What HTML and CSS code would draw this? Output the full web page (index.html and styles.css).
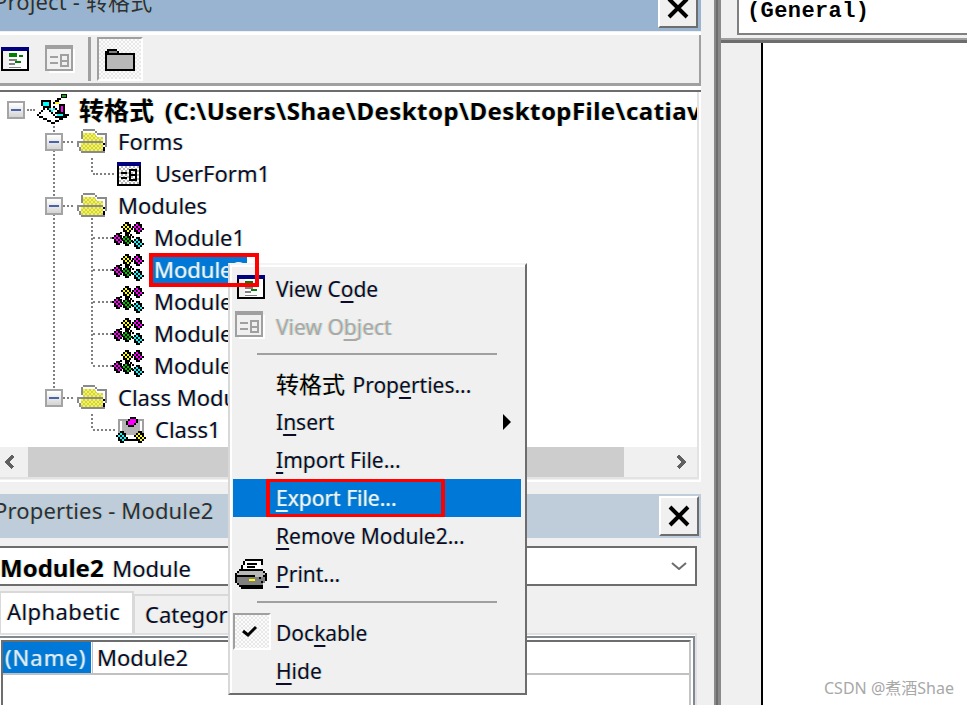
FILE: index.html
```html
<!DOCTYPE html>
<html lang="en">
<head>
<meta charset="utf-8">
<title>VBA Editor - Export File</title>
<link rel="stylesheet" href="styles.css">
</head>
<body>
<svg class="defs" aria-hidden="true">
  <defs>
    <pattern id="chk-yellow" width="4" height="4" patternUnits="userSpaceOnUse"><rect width="4" height="4" fill="#ffff00"/><rect width="2" height="2" fill="#c8c8a0"/><rect x="2" y="2" width="2" height="2" fill="#c8c8a0"/></pattern>
    <pattern id="chk-grey" width="4" height="4" patternUnits="userSpaceOnUse"><rect width="4" height="4" fill="#ffffff"/><rect width="2" height="2" fill="#b8b8b8"/><rect x="2" y="2" width="2" height="2" fill="#b8b8b8"/></pattern>
    <symbol id="dia" viewBox="0 0 12 12" width="12" height="12">
      <path fill="#000" d="M4 0h4v2H4zM2 2h2v2H2zM6 2h4v2H6zM0 4h2v2H0zM4 4h2v2H4zM8 4h2v2H8zM2 6h2v2H2zM6 6h2v2H6zM10 6h2v2h-2zM2 8h4v2H2zM8 8h2v2H8zM4 10h4v2H4z"/>
      <path d="M4 2h2v2H4zM2 4h2v2H2zM6 4h2v2H6zM4 6h2v2H4zM8 6h2v2H8zM6 8h2v2H6z"/>
    </symbol>
    <symbol id="mod" viewBox="0 0 32 27" width="32" height="27">
      <path fill="#000" d="M8 10h2v2H8zM6 12h2v2H6zM16 10h2v2h-2zM18 12h2v2h-2zM20 14h2v2h-2z"/>
      <use href="#dia" x="9" y="0" fill="#ffff00"/>
      <use href="#dia" x="20" y="0" fill="#ff00ff"/>
      <use href="#dia" x="0" y="11" fill="#ff00ff"/>
      <use href="#dia" x="9" y="12" fill="#00c000"/>
      <use href="#dia" x="20" y="15" fill="#00ffff"/>
    </symbol>
    <symbol id="folder-open" viewBox="0 0 30 24" width="30" height="24">
      <path fill="#fff" d="M6 2h12v2H6z"/>
      <path fill="url(#chk-yellow)" d="M6 4h12l2 4h6v6H6z"/>
      <path fill="url(#chk-yellow)" d="M4 14h22v8H4z"/>
      <path fill="#8a8a8a" d="M6 0h12v2H6zM4 2h2v8H4zM18 2h2v2h-2zM20 4h10v2H20zM28 6h2v12h-2zM0 12h6v2H0zM0 14h2v4H0zM2 18h2v4H2zM4 22h24v2H4zM6 12h20v2H6z"/>
      <path fill="#000" d="M26 14h2v2h-2zM26 18h2v4h-2z"/>
    </symbol>
    <symbol id="code-icon" viewBox="0 0 28 24" width="28" height="24">
      <path fill="#000080" d="M0 0h28v4H0z"/>
      <path fill="#000" d="M0 4h2v20H0zM26 4h2v20h-2zM0 22h28v2H0z"/>
      <path fill="#fff" d="M2 4h24v18H2z"/>
      <path fill="#f0f0f0" d="M2 4h6v18H2z"/>
      <path fill="#008000" d="M8 6h8v4H8zM18 8h4v2h-4zM14 14h6v2h-6z"/>
      <path fill="#808080" d="M8 12h8v2H8zM8 16h6v2H8zM8 20h12v1H8z"/>
    </symbol>
    <symbol id="object-icon" viewBox="0 0 30 28" width="30" height="28">
      <path fill="#fff" d="M4 4h26v24H4z"/>
      <path fill="#a0a0a0" d="M0 0h28v4H0zM0 4h2v22H0zM26 4h2v22h-2zM0 24h28v2H0z"/>
      <path fill="#f0f0f0" d="M2 4h24v20H2z"/>
      <path fill="#a0a0a0" d="M5 11h8v2H5zM5 17h8v2H5zM15 9h9v2h-9zM15 15h9v2h-9zM15 9h2v12h-2zM22 9h2v12h-2zM15 20h9v2h-9z"/>
    </symbol>
  </defs>
</svg>

<div class="app">
  <div class="left">
    <header class="titlebar titlebar-project">
      <span class="title-text title-clipped">Project - 转格式</span>
      <span class="close close-clipped"><svg class="x" viewBox="0 0 22 22" width="22" height="22"><path d="M2 2L20 20M20 2L2 20"/></svg></span>
    </header>
    <div class="title-rule"></div>
    <div class="toolbar">
      <svg class="tb-code" width="28" height="24"><use href="#code-icon"/></svg>
      <svg class="tb-object" width="30" height="28"><use href="#object-icon"/></svg>
      <span class="tb-sep"></span>
      <span class="tb-toggle">
        <svg viewBox="0 0 30 24" width="30" height="24"><path fill="#000" d="M2 2h10v2h2v2h16v18H0V4h2z"/><path fill="#b8b8b8" d="M2 8h26v14H2z"/><path fill="#808080" d="M4 4h8v2H4z"/></svg>
      </span>
    </div>
    <div class="tool-rules"></div>
    <div class="tree-frame">
      <div class="tree">
        <div class="row">
          <span class="box box-root"></span><span class="dash dash-root"></span>
          <svg class="ic-project" viewBox="0 0 32 30" width="32" height="30">
            <path fill="#000" d="M24 0h6v4h-6zM20 4h4v2h-4zM18 6h4v2h-4zM16 8h2v2h-2zM4 6h10v2H4zM4 6h2v6H4zM12 6h2v8h-2zM6 12h6v2H6zM10 14h2v2h-2zM12 16h2v2h-2zM14 18h2v2h-2zM16 12h2v2h-2zM18 14h2v2h-2zM20 16h2v2h-2zM22 10h6v2h-6zM22 10h2v8h-2zM26 10h2v8h-2zM22 18h6v2h-6zM18 18h8v2h-8zM26 18h2v4h-2zM18 22h10v2H18zM6 14h2v2H6zM4 16h2v2H4zM2 18h2v2H2zM0 20h2v2H0zM2 22h4v2H2zM6 24h4v2H6zM10 26h4v2h-4zM14 28h4v2h-4zM18 26h4v2h-4zM22 24h4v2h-4zM26 22h4v2h-4zM28 20h4v2h-4zM16 20h2v2h-2z"/>
            <path fill="#00b000" d="M25 1h4v2h-4z"/>
            <path fill="#ffff00" d="M18 8h4v2h-4z"/>
            <path fill="#ff00ff" d="M24 12h2v6h-2z"/>
            <path fill="#00ffff" d="M6 8h6v4H6zM12 14h2v2h-2zM14 16h2v2h-2zM16 14h2v2h-2zM20 20h6v2h-6z"/>
          </svg>
          <span class="label label-root"><span class="cjk-root">转格式</span> (C:\Users\Shae\Desktop\DesktopFile\catiav</span>
        </div>
        <div class="row v1">
          <span class="box box-1"></span><span class="dash dash-1"></span>
          <svg class="ic-folder" width="30" height="24"><use href="#folder-open"/></svg>
          <span class="label label-1">Forms</span>
        </div>
        <div class="row v1-dim">
          <span class="elbow"></span>
          <svg class="ic-form" viewBox="0 0 24 24" width="24" height="24"><path fill="url(#chk-grey)" d="M2 4h20v18H2z"/><path fill="#000080" d="M0 0h24v4H0z"/><path fill="#000" d="M0 4h2v20H0zM22 4h2v20h-2zM0 22h24v2H0zM4 10h6v2H4zM4 15h6v2H4zM12 7h8v2h-8zM12 12h8v2h-8zM12 17h8v2h-8zM12 7h2v12h-2zM18 7h2v12h-2z"/></svg>
          <span class="label">UserForm1</span>
        </div>
        <div class="row v1-v2-start">
          <span class="box box-1"></span><span class="dash dash-1"></span>
          <svg class="ic-folder" width="30" height="24"><use href="#folder-open"/></svg>
          <span class="label label-1">Modules</span>
        </div>
        <div class="row v1 v2"><span class="elbow elbow-mod"></span><svg class="ic-mod" width="32" height="27"><use href="#mod"/></svg><span class="label">Module1</span></div>
        <div class="row v1 v2"><span class="elbow elbow-mod"></span><svg class="ic-mod" width="32" height="27"><use href="#mod"/></svg><span class="label label-selected">Module2</span></div>
        <div class="row v1 v2"><span class="elbow elbow-mod"></span><svg class="ic-mod" width="32" height="27"><use href="#mod"/></svg><span class="label">Module3</span></div>
        <div class="row v1 v2"><span class="elbow elbow-mod"></span><svg class="ic-mod" width="32" height="27"><use href="#mod"/></svg><span class="label">Module4</span></div>
        <div class="row v1 v2-end"><span class="elbow elbow-mod"></span><svg class="ic-mod" width="32" height="27"><use href="#mod"/></svg><span class="label">Module5</span></div>
        <div class="row v1-end">
          <span class="box box-1"></span><span class="dash dash-1"></span>
          <svg class="ic-folder" width="30" height="24"><use href="#folder-open"/></svg>
          <span class="label label-1">Class Modules</span>
        </div>
        <div class="row v2-end">
          <span class="elbow elbow-class"></span>
          <svg class="ic-class" viewBox="0 0 30 26" width="30" height="26">
            <path fill="#a0a0a0" d="M2 2h26v2H2zM2 2h2v16H2zM26 2h2v16h-2z"/>
            <path fill="#b4b4b4" d="M6 4h18v10l-4 4H10l-4-4z"/>
            <path fill="#000" d="M8 22h14v2H8z"/>
            <path fill="#000" d="M14 0h6v2h-6zM12 2h2v2h-2zM20 2h2v4h-2zM10 4h2v4h-2zM18 6h2v2h-2zM12 8h6v2h-6z"/>
            <path fill="#ff00ff" d="M14 2h6v4h-2v2h-6V4h2z"/>
            <use href="#dia" x="0" y="14" fill="#00ffff"/>
            <use href="#dia" x="18" y="14" fill="#ffff00"/>
          </svg>
          <span class="label">Class1</span>
        </div>
      </div>
      <div class="hscroll">
        <svg class="arrow" viewBox="0 0 12 16" width="12" height="16"><path d="M9 2L3 8L9 14"/></svg>
        <span class="thumb"></span>
        <svg class="arrow" viewBox="0 0 12 16" width="12" height="16"><path d="M3 2L9 8L3 14"/></svg>
      </div>
    </div>
    <div class="pane-gap"></div>
    <header class="titlebar titlebar-props">
      <span class="title-text title-props">Properties - Module2</span>
      <span class="close"><svg class="x" viewBox="0 0 22 22" width="22" height="22"><path d="M2 2L20 20M20 2L2 20"/></svg></span>
    </header>
    <div class="combo">
      <span class="combo-text"><b>Module2</b> Module</span>
      <svg class="chev" viewBox="0 0 16 8" width="16" height="8"><path d="M1 1L8 7L15 1"/></svg>
    </div>
    <div class="tabs">
      <span class="tab tab-active">Alphabetic</span>
      <span class="tab">Categorized</span>
    </div>
    <div class="grid-outer">
      <div class="grid-mid">
        <div class="grid">
          <div class="grid-row">
            <span class="cell-key">(Name)</span>
            <span class="cell-val">Module2</span>
          </div>
        </div>
      </div>
    </div>
  </div>

  <div class="splitter"></div>

  <div class="right">
    <div class="obj-bar"><span class="obj-combo">(General)</span></div>
    <div class="code-rules"></div>
    <div class="code-area">
      <div class="margin"></div>
      <div class="code"></div>
    </div>
  </div>

  <div class="menu">
    <div class="mi"><svg class="mi-icon" width="28" height="24"><use href="#code-icon"/></svg>View C<u>o</u>de</div>
    <div class="mi mi-disabled"><svg class="mi-icon mi-icon-obj" width="30" height="28"><use href="#object-icon"/></svg>View O<u>b</u>ject</div>
    <div class="msep msep-1"></div>
    <div class="mi"><span class="cjk">转格式</span> Prop<u>e</u>rties...</div>
    <div class="mi">I<u>n</u>sert<span class="sub"></span></div>
    <div class="mi"><u>I</u>mport File...</div>
    <div class="mi mi-active"><u>E</u>xport File...</div>
    <div class="mi"><u>R</u>emove Module2...</div>
    <div class="mi">
      <svg class="mi-icon mi-icon-print" viewBox="0 0 32 30" width="32" height="30">
        <path fill="#fff" d="M8 2h18v10H8z"/>
        <path fill="#000" d="M10 0h18v2H10zM8 2h2v4H8zM26 2h2v4h-2zM6 6h2v4H6zM12 4h10v2H12zM12 7h8v2H12z"/>
        <path fill="#000" d="M4 10h24v2H4zM2 12h2v2H2zM28 12h2v2h-2zM0 14h2v10H0zM30 14h2v8h-2zM2 24h2v2H2zM4 26h24v2H4zM6 28h22v2H6z"/>
        <path fill="#b8b8b8" d="M4 12h24v2H4zM2 14h28v4H2z"/>
        <path fill="#808080" d="M2 18h28v6H2zM4 24h24v2H4z"/>
        <path fill="#000" d="M2 16h18v2H2z"/>
        <path fill="#ffff00" d="M14 20h6v2h-6z"/>
        <path fill="#000" d="M24 18h2v2h-2zM28 16h2v2h-2zM26 22h2v2h-2z"/>
      </svg><u>P</u>rint...
    </div>
    <div class="msep msep-2"></div>
    <div class="mi"><span class="check-btn"><svg viewBox="0 0 16 12" width="16" height="12"><path d="M1 6l5 4L14 2"/></svg></span>Doc<u>k</u>able</div>
    <div class="mi"><u>H</u>ide</div>
  </div>

  <div class="mark mark-module"></div>
  <div class="mark mark-export"></div>
  <div class="watermark">CSDN @煮酒Shae</div>
</div>
</body>
</html>
```

FILE: styles.css
```css
html, body { margin: 0; padding: 0; }
body {
  width: 967px;
  height: 705px;
  overflow: hidden;
  background: #fff;
  font-family: "Noto Sans", "Noto Sans CJK SC", sans-serif;
  font-size: 22px;
  color: #0c0c28;
}
.defs { position: absolute; width: 0; height: 0; }
svg { display: block; shape-rendering: crispEdges; flex: none; }
.app {
  position: relative;
  display: flex;
  width: 967px;
  height: 705px;
  overflow: hidden;
  text-shadow: -1px 0 rgba(255, 170, 70, .4), 1px 0 rgba(70, 220, 255, .4);
}

/* Left dock column */
.left { width: 701px; height: 705px; flex: none; background: #f0f0f0; display: flex; flex-direction: column; overflow: hidden; }
.titlebar { display: flex; justify-content: space-between; flex: none; overflow: hidden; }
.titlebar-project { height: 31px; background: #99b4d1; }
.titlebar-props { height: 44px; background: #bfcddb; align-items: center; padding-right: 2px; box-sizing: border-box; }
.title-text { white-space: nowrap; color: #2b2f38; letter-spacing: .15px; }
.title-clipped { margin: -14px 0 0 -6px; line-height: 30px; }
.title-props { margin: 0 0 12px -6px; }
.close {
  width: 40px; height: 40px; box-sizing: border-box; flex: none;
  background: #f0f0f0;
  border: 2px solid; border-color: #fff #6d6d6d #6d6d6d #fff;
  display: flex; align-items: center; justify-content: center;
}
.close-clipped { margin: -12px 3px 0 0; }
.x path { stroke: #000; stroke-width: 4; fill: none; }
.x { shape-rendering: auto; }
.title-rule { height: 4px; flex: none; background: linear-gradient(#f0f0f0 0 1px, #fff 1px 4px); }

.toolbar { height: 48px; flex: none; display: flex; align-items: center; box-sizing: border-box; padding-left: 1px; border-right: 2px solid #a0a0a0; }
.tb-object { margin-left: 16px; }
.tb-sep { width: 3px; height: 44px; margin-left: 13px; background: #a0a0a0; }
.tb-toggle {
  width: 46px; height: 44px; box-sizing: border-box; margin-left: 6px;
  border: 2px solid; border-color: #a0a0a0 #fff #fff #a0a0a0;
  background: repeating-conic-gradient(#e8e8e8 0 25%, #fbfbfb 0 50%) 0 0 / 4px 4px;
  display: flex; align-items: center; justify-content: center;
}
.tool-rules { height: 9px; flex: none; background: linear-gradient(#a0a0a0 0 3px, #fff 3px 7px, #6d6d6d 7px 9px); }

.tree-frame { height: 390px; flex: none; box-sizing: border-box; border-right: 2px solid #fff; border-bottom: 2px solid #fff; }
.tree, .hscroll { border-right: 2px solid #e3e3e3; }
.tree { height: 355px; box-sizing: border-box; padding-top: 2px; background: #fff; overflow: hidden; }
.row {
  height: 32px; display: flex; align-items: center; white-space: nowrap; box-sizing: border-box;
  --dot: repeating-linear-gradient(#808080 0 2px, transparent 2px 4px);
  background-repeat: no-repeat;
}
.v1 { background-image: var(--dot); background-position: 53px 0; background-size: 2px 100%; }
.v1-dim { background-image: var(--dot), var(--dot); background-position: 53px 0, 91px 0; background-size: 2px 100%, 2px 16px; }
.v1-v2-start { background-image: var(--dot), var(--dot); background-position: 53px 0, 91px 20px; background-size: 2px 100%, 2px 12px; }
.v1.v2 { background-image: var(--dot), var(--dot); background-position: 53px 0, 91px 0; background-size: 2px 100%, 2px 100%; }
.v1.v2-end { background-image: var(--dot), var(--dot); background-position: 53px 0, 91px 0; background-size: 2px 100%, 2px 16px; }
.v1-end { background-image: var(--dot); background-position: 53px 0; background-size: 2px 8px; }
.v2-end { background-image: var(--dot); background-position: 91px 0; background-size: 2px 16px; }

.box {
  width: 18px; height: 18px; box-sizing: border-box; flex: none;
  border: 2px solid #a4a4a4;
  background: linear-gradient(#4a62a8, #4a62a8) center / 10px 2px no-repeat, linear-gradient(#fff, #d4d4d4);
}
.box-root { margin-left: 7px; }
.box-1 { margin-left: 45px; }
.dash { height: 0; border-top: 2px dotted #808080; flex: none; }
.dash-root { width: 8px; margin: 0 2px 0 2px; }
.dash-1 { width: 10px; margin: 0 4px 0 0; }
.ic-project { margin-right: 10px; margin-top: -2px; }
.ic-folder { margin-right: 11px; margin-top: -3px; }
.elbow { width: 21px; height: 0; border-top: 2px dotted #808080; margin-left: 93px; flex: none; }
.elbow-mod { width: 19px; }
.elbow-class { width: 22px; }
.ic-form { margin: 0 12px 0 3px; }
.ic-mod { margin: -5px 8px 0 0; }
.ic-class { margin: 0 7px 0 1px; }
.label { display: inline-block; padding: 0 2px; line-height: 30px; margin-top: -2px; }
.label-1 { padding-left: 0; }
.label-root { font-weight: 700; font-size: 24px; letter-spacing: .45px; color: #000; padding-left: 0; margin-top: 0; }
.cjk-root { font-size: 25px; letter-spacing: 0; margin-right: 4px; }
.label-selected { background: #0078d7; color: #e8f2ff; }

.hscroll { height: 32px; box-sizing: border-box; border-bottom: 2px solid #e3e3e3; display: flex; align-items: center; justify-content: space-between; padding: 0 10px 0 4px; }
.arrow path { fill: none; stroke: #606060; stroke-width: 3; }
.thumb { width: 596px; height: 30px; background: #cdcdcd; margin-left: 7px; margin-right: 46px; }
.pane-gap { height: 12px; flex: none; }

.combo {
  height: 40px; flex: none; box-sizing: border-box; margin: 8px 4px 0 -4px;
  background: #fff; border: 2px solid #6d6d6d;
  display: flex; align-items: center; justify-content: space-between; padding: 0 8px 0 2px;
}
.combo-text { white-space: nowrap; margin-top: 2px; }
.combo-text b { color: #000; font-size: 24px; margin-right: 3px; }
.chev path { fill: none; stroke: #6d6d6d; stroke-width: 2; }
.chev { shape-rendering: auto; }

.tabs { height: 42px; flex: none; margin-top: 5px; display: flex; align-items: flex-end; }
.tab { box-sizing: border-box; height: 39px; line-height: 36px; padding: 0 10px; border: 2px solid #d9d9d9; border-bottom: 0; margin-left: -1px; white-space: nowrap; }
.tab-active { height: 42px; width: 135px; background: #fff; padding-left: 6px; letter-spacing: .4px; }

.grid-outer { flex: 1; box-sizing: border-box; margin-right: 4px; border-top: 2px solid #e0e0e0; border-right: 2px solid #e0e0e0; background: #fff; padding-top: 1px; }
.grid-mid { height: 100%; box-sizing: border-box; border-top: 2px solid #808890; border-right: 2px solid #808890; padding: 2px 2px 0 0; background: #fff; }
.grid { height: 100%; box-sizing: border-box; border-top: 2px solid #6d6d6d; border-left: 2px solid #6d6d6d; border-right: 2px solid #c4c4c4; margin-left: 1px; }
.grid-row { height: 33px; box-sizing: border-box; border-bottom: 2px solid #c0c0c0; display: flex; align-items: stretch; }
.cell-key { width: 88px; background: #0078d7; color: #dcebff; line-height: 30px; padding-left: 2px; box-sizing: border-box; white-space: nowrap; letter-spacing: 1px; }
.cell-val { padding-left: 4px; line-height: 30px; border-left: 1px solid #c0c0c0; margin-left: 1px; }

/* Splitter + code window */
.splitter { width: 20px; flex: none; background: linear-gradient(90deg, #f0f0f0 0 13px, #8a8a8a 13px 15px, #6d6d6d 15px 17px, #8a8a8a 17px 20px); }
.right { flex: 1; display: flex; flex-direction: column; background: #f0f0f0; }
.obj-bar { height: 35px; flex: none; padding-left: 16px; }
.obj-combo {
  display: block; height: 35px; box-sizing: border-box; background: #fff;
  border-left: 2px solid #808080; border-bottom: 2px solid #808080;
  font-family: "Liberation Mono", monospace; font-weight: 700; font-size: 22px; line-height: 24px;
  padding-left: 8px; letter-spacing: .4px; color: #000; text-shadow: none;
}
.code-rules { height: 8px; flex: none; background: linear-gradient(#f0f0f0 0 3px, #a0a0a0 3px 5px, #6d6d6d 5px 8px); }
.code-area { flex: 1; display: flex; }
.margin { width: 40px; background: #f0f0f0; flex: none; }
.code { flex: 1; background: #fff; border-left: 2px solid #000; }

/* Context menu */
.menu {
  position: absolute; left: 228px; top: 263px; width: 299px; height: 432px; box-sizing: border-box;
  background: #f0f0f0;
  border: 2px solid; border-color: #f4f4f4 #6d6d6d #6d6d6d #d8d8d8;
  box-shadow: inset 2px 2px 0 #fff;
  padding: 5px 4px 0 3px;
  font-size: 21px;
}
.mi { position: relative; height: 38px; line-height: 39px; padding-left: 43px; white-space: nowrap; text-underline-offset: 4px; }
.mi u { text-decoration-thickness: 2px; }
.cjk { font-size: 23px; color: #000; margin-right: 2px; }
.mi-disabled { color: #a8a8a8; }
.mi-active { background: #0078d7; color: #eaf4ff; }
.mi-icon { position: absolute; left: 4px; top: 5px; }
.mi-icon-obj { left: 2px; top: 3px; }
.mi-icon-print { left: 2px; top: 4px; }
.msep { height: 2px; background: #a0a0a0; margin: 0 24px; }
.msep-1 { margin-top: 7px; margin-bottom: 10px; }
.msep-2 { margin-top: 8px; margin-bottom: 11px; }
.sub { position: absolute; left: 270px; top: 11px; width: 0; height: 0; border-left: 8px solid #000; border-top: 8px solid transparent; border-bottom: 8px solid transparent; }
.check-btn {
  position: absolute; left: 0; top: -1px; width: 38px; height: 37px; box-sizing: border-box;
  border: 2px solid; border-color: #a0a0a0 #fff #fff #a0a0a0;
  background: repeating-conic-gradient(#e8e8e8 0 25%, #fbfbfb 0 50%) 0 0 / 4px 4px;
  display: flex; align-items: center; justify-content: center;
}
.check-btn path { fill: none; stroke: #000; stroke-width: 3; }
.check-btn svg { shape-rendering: auto; margin: 0 4px 2px 0; }

/* Annotations */
.mark { position: absolute; box-sizing: border-box; border: 4px solid #ff0000; }
.mark-module { left: 149px; top: 253px; width: 110px; height: 34px; }
.mark-export { left: 266px; top: 479px; width: 179px; height: 38px; border-width: 3px 4px 3px 4px; }
.watermark { position: absolute; left: 824px; top: 678px; font-size: 16px; line-height: 20px; color: #a8a8a8; text-shadow: none; white-space: nowrap; }
```
